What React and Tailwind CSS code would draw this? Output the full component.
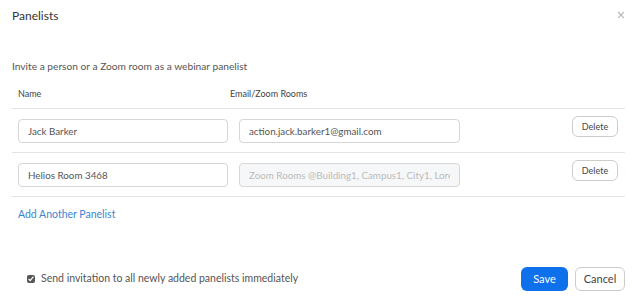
import React, { useState } from "react";

const rows = [
  { name: "Jack Barker", email: "action.jack.barker1@gmail.com", room: false },
  {
    name: "Helios Room 3468",
    email: "",
    placeholder: "Zoom Rooms @Building1, Campus1, City1, Lorem",
    room: true,
  },
];

const App = () => {
  const [sendInvite, setSendInvite] = useState(true);

  return (
    <div
      className="w-[640px] h-[299px] bg-white text-[#555] overflow-hidden flex flex-col"
      style={{ fontFamily: "Lato, 'Open Sans', sans-serif" }}
    >
      {/* Header */}
      <div className="flex items-start justify-between pl-3 pr-[15px] pt-[7px]">
        <h1 className="text-[12px] leading-[18px] text-[#333]">Panelists</h1>
        <button className="mt-[4px] text-[#bbb]">
          <svg width="8" height="8" viewBox="0 0 8 8" stroke="currentColor" strokeWidth="1.1">
            <path d="M1 1L7 7M7 1L1 7" />
          </svg>
        </button>
      </div>

      <p className="px-3 mt-[33px] text-[10.2px] leading-[16px] text-[#555]">
        Invite a person or a Zoom room as a webinar panelist
      </p>

      {/* Table */}
      <div className="ml-3 w-[613px] mt-[13px]">
        <div className="flex text-[9px] leading-[14px] text-[#444] pl-[6px] pb-[7px] border-b border-[#e4e4e4]">
          <div className="w-[212px]">Name</div>
          <div>Email/Zoom Rooms</div>
        </div>
        {rows.map((row, index) => (
          <div
            key={index}
            className="flex items-start h-[44px] border-b border-[#e4e4e4] pl-[6px]"
          >
            <input
              defaultValue={row.name}
              className="mt-[10px] w-[210px] h-[24px] rounded-[4px] border border-[#d6d6d6] px-[9px] text-[9.8px] text-[#555] outline-none"
            />
            <input
              defaultValue={row.email}
              placeholder={row.placeholder}
              disabled={row.room}
              className={`mt-[10px] ml-[11px] w-[221px] h-[24px] rounded-[4px] border border-[#d6d6d6] px-[9px] text-[9.8px] text-[#555] outline-none placeholder:text-[#bbb] ${
                row.room ? "bg-[#f6f7f9]" : "bg-white"
              }`}
            />
            <button className="ml-auto mr-[7px] mt-[7px] w-[46px] h-[21px] rounded-[6px] border border-[#ccc] text-[9px] text-[#444] bg-white">
              Delete
            </button>
          </div>
        ))}
        <button className="ml-[6px] mt-[9px] text-[10.5px] leading-[16px] text-[#3a86cf]">
          Add Another Panelist
        </button>
      </div>

      {/* Footer */}
      <div className="mt-auto mb-[8px] flex items-center pl-[27px] pr-[15px]">
        <label className="flex items-center gap-[6px] text-[10.5px] text-[#555]">
          <input
            type="checkbox"
            checked={sendInvite}
            onChange={() => setSendInvite(!sendInvite)}
            className="w-[8px] h-[8px] accent-[#555] m-0"
          />
          Send invitation to all newly added panelists immediately
        </label>
        <div className="ml-auto flex gap-[7px]">
          <button className="w-[47px] h-[24px] rounded-[6px] bg-[#0e71eb] text-white text-[11px]">
            Save
          </button>
          <button className="w-[50px] h-[24px] rounded-[6px] border border-[#ccc] bg-white text-[#444] text-[11px]">
            Cancel
          </button>
        </div>
      </div>
    </div>
  );
};

export default App;
